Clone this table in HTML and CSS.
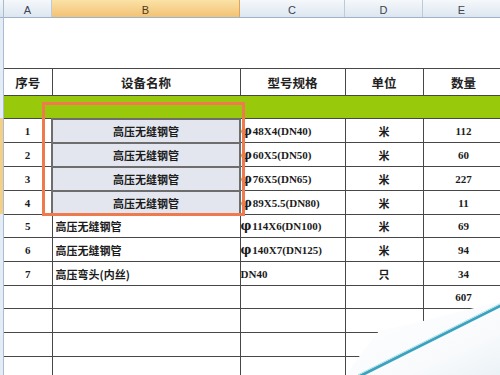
FILE: index.html
```html
<!DOCTYPE html>
<html lang="zh">
<head>
<meta charset="utf-8">
<title>设备清单</title>
<link rel="stylesheet" href="styles.css">
</head>
<body>
<div class="page">
  <div class="rowheads">
    <div class="rh-corner"></div>
    <div class="rh-top"></div>
    <div class="rh-sel"></div>
    <div class="rh-rest"></div>
  </div>
  <div class="sheet">
    <div class="colheads">
      <div class="ch ch-a">A</div>
      <div class="ch ch-b">B</div>
      <div class="ch ch-c">C</div>
      <div class="ch ch-d">D</div>
      <div class="ch ch-e">E</div>
    </div>
    <div class="blank"></div>
    <table class="grid">
      <colgroup>
        <col class="w-a"><col class="w-b"><col class="w-c"><col class="w-d"><col class="w-e">
      </colgroup>
      <thead>
        <tr class="r-head">
          <th>序号</th><th>设备名称</th><th>型号规格</th><th>单位</th><th>数量</th>
        </tr>
      </thead>
      <tbody>
        <tr class="r-green"><td colspan="5" class="green"></td></tr>
        <tr class="r24"><td class="num">1</td><td class="sel cn">高压无缝钢管</td><td class="spec"><span class="phi">φ</span>48X4(DN40)</td><td class="cn unit">米</td><td class="num">112</td></tr>
        <tr class="r24"><td class="num">2</td><td class="sel cn">高压无缝钢管</td><td class="spec"><span class="phi">φ</span>60X5(DN50)</td><td class="cn unit">米</td><td class="num">60</td></tr>
        <tr class="r24"><td class="num">3</td><td class="sel cn">高压无缝钢管</td><td class="spec"><span class="phi">φ</span>76X5(DN65)</td><td class="cn unit">米</td><td class="num">227</td></tr>
        <tr class="r24"><td class="num">4</td><td class="sel cn">高压无缝钢管</td><td class="spec"><span class="phi">φ</span>89X5.5(DN80)</td><td class="cn unit">米</td><td class="num">11</td></tr>
        <tr class="r23"><td class="num">5</td><td class="cn left">高压无缝钢管</td><td class="spec"><span class="phi">φ</span>114X6(DN100)</td><td class="cn unit">米</td><td class="num">69</td></tr>
        <tr class="r24"><td class="num">6</td><td class="cn left">高压无缝钢管</td><td class="spec"><span class="phi">φ</span>140X7(DN125)</td><td class="cn unit">米</td><td class="num">94</td></tr>
        <tr class="r24"><td class="num">7</td><td class="cn left">高压弯头(内丝)</td><td class="spec">DN40</td><td class="cn unit">只</td><td class="num">34</td></tr>
        <tr class="r23"><td></td><td></td><td></td><td></td><td class="num">607</td></tr>
        <tr class="r24"><td></td><td></td><td></td><td></td><td></td></tr>
        <tr class="r24"><td></td><td></td><td></td><td></td><td></td></tr>
        <tr class="r24"><td></td><td></td><td></td><td></td><td></td></tr>
      </tbody>
    </table>
    <div class="annot"></div>
    <svg class="curl" viewBox="0 0 500 375" width="500" height="375" aria-hidden="true">
      <defs>
        <linearGradient id="flap" x1="0" y1="0" x2="1" y2="1">
          <stop offset="0" stop-color="#ffffff"/>
          <stop offset="0.7" stop-color="#f8fafc"/>
          <stop offset="1" stop-color="#ebf2f6"/>
        </linearGradient>
      </defs>
      <polygon points="490,304 423,321 379,331 364,350 346,375 500,375 500,302" fill="url(#flap)"/>
      <line x1="358" y1="377" x2="502" y2="305" stroke="#3aa2bd" stroke-width="2.8"/>
      <line x1="358" y1="374.8" x2="502" y2="302.8" stroke="#a6dce8" stroke-width="0.9"/>
    </svg>
  </div>
</div>
</body>
</html>
```
FILE: styles.css
```css
* { box-sizing: border-box; }
html, body { margin: 0; padding: 0; }
body {
  width: 500px;
  height: 375px;
  overflow: hidden;
  background: #ffffff;
  font-family: "Liberation Serif", "Noto Sans CJK SC", serif;
  color: #1b1b1b;
}
.page {
  display: flex;
  width: 500px;
  height: 375px;
}
.rowheads {
  width: 4px;
  display: flex;
  flex-direction: column;
  border-right: 1px solid #a9bdd2;
}
.rh-corner {
  height: 18px;
  background: linear-gradient(#f3f6fa, #d9e3ee);
  border-bottom: 1px solid #9fb3c8;
}
.rh-top { height: 100px; background: #e4ecf5; }
.rh-sel { height: 96px; background: #f6cf86; }
.rh-rest { flex: 1; background: #e4ecf5; }

.sheet {
  position: relative;
  width: 496px;
  height: 375px;
}
.colheads {
  display: flex;
  height: 18px;
  border-bottom: 1px solid #9fb3c8;
}
.ch {
  display: flex;
  align-items: center;
  justify-content: center;
  font-family: "Liberation Sans", Arial, sans-serif;
  font-size: 11px;
  color: #3c4550;
  background: linear-gradient(#f5f8fb, #dde6f0);
  border-right: 1px solid #bccbdb;
  padding-top: 2px;
}
.ch-a { width: 48px; }
.ch-b {
  width: 188px;
  background: linear-gradient(#fbe2a6, #f2c275);
  border-right: 1px solid #dea55a;
  color: #4a3b22;
}
.ch-c { width: 105px; }
.ch-d { width: 78px; }
.ch-e { width: 77px; border-right: 0; }

.blank { height: 50px; }

.grid {
  border-collapse: collapse;
  table-layout: fixed;
  width: 500px;
}
.w-a { width: 48px; }
.w-b { width: 188px; }
.w-c { width: 105px; }
.w-d { width: 78px; }
.w-e { width: 81px; }

.grid th, .grid td {
  border: 1px solid #474747;
  padding: 0;
  white-space: nowrap;
  overflow: hidden;
}
.grid tr > :first-child { border-left: 0; }
.grid th {
  font-family: "Noto Sans CJK SC", sans-serif;
  font-weight: 700;
  font-size: 12.5px;
  text-align: center;
  color: #222;
}
.r-head { height: 27px; }
.r-green { height: 23px; }
.r24 { height: 24px; }
.r23 { height: 23px; }
.green { background: #98c90a; border-left: 0; }

.num {
  font-family: "Liberation Serif", serif;
  font-weight: 700;
  font-size: 11px;
  text-align: center;
}
.cn {
  font-family: "Noto Sans CJK SC", sans-serif;
  font-weight: 700;
  font-size: 11px;
  text-align: center;
}
.cn.left { text-align: left; padding-left: 3px; }
.spec {
  font-family: "Liberation Serif", serif;
  font-weight: 700;
  font-size: 11px;
  padding-left: 3px;
}
.phi {
  font-family: "DejaVu Serif", serif;
  font-size: 12px;
  font-weight: 700;
  margin-right: 1px;
}
.grid td.sel {
  background: #e3e6ee;
  border: 2px solid #6d6d6d;
}

.annot {
  position: absolute;
  left: 38px;
  top: 102px;
  width: 203px;
  height: 114px;
  border: 3px solid #ef7a4d;
}
.curl {
  position: absolute;
  left: -4px;
  top: 0;
  pointer-events: none;
}
```
